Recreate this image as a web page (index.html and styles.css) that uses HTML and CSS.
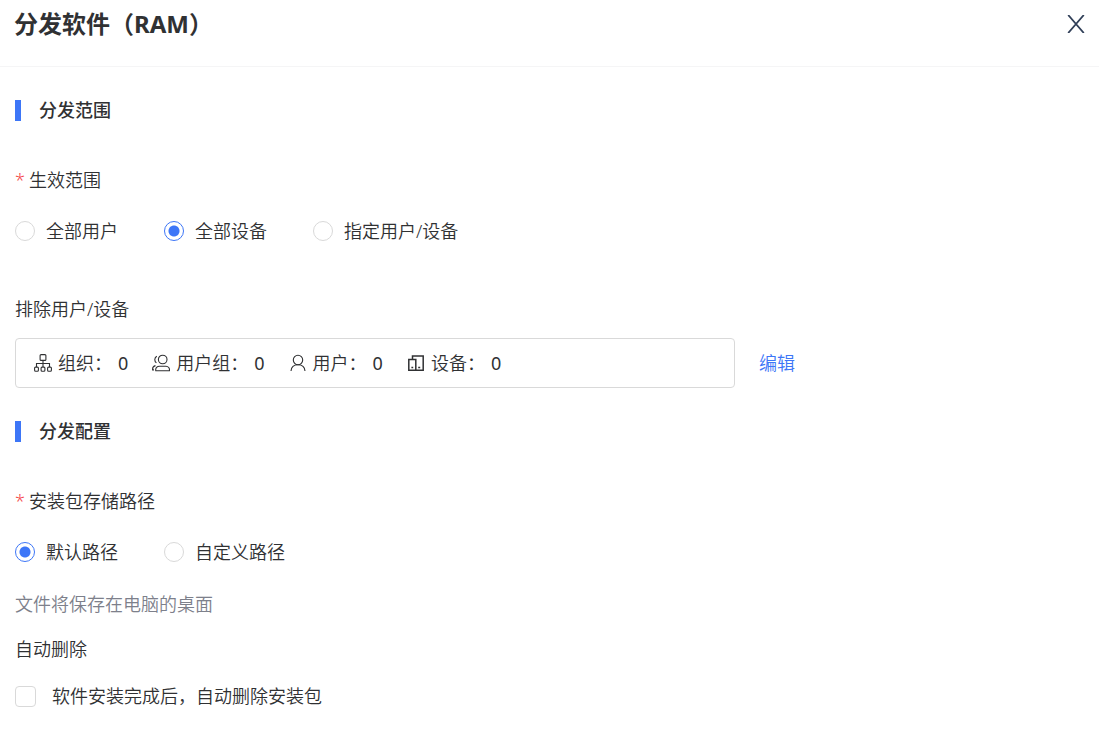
FILE: index.html
```html
<!DOCTYPE html>
<html lang="zh-CN">
<head>
<meta charset="utf-8">
<meta name="viewport" content="width=device-width, initial-scale=1">
<title>分发软件（RAM）</title>
<link rel="stylesheet" href="styles.css">
</head>
<body>
<header class="header">
  <h1 class="title">分发软件（RAM）</h1>
  <button class="close" type="button" aria-label="关闭">
    <svg width="18" height="18" viewBox="0 0 18 18" fill="none" stroke="currentColor" stroke-width="1.8"><path d="M1.2 0L16.8 18M16.8 0L1.2 18"/></svg>
  </button>
</header>
<main class="content">
  <h2 class="section">分发范围</h2>
  <fieldset class="group">
    <legend class="label required">生效范围</legend>
    <div class="options">
      <label class="option"><input type="radio" name="scope">全部用户</label>
      <label class="option"><input type="radio" name="scope" checked>全部设备</label>
      <label class="option"><input type="radio" name="scope">指定用户/设备</label>
    </div>
  </fieldset>
  <div class="exclude">
    <div class="label">排除用户/设备</div>
    <div class="exclude-row">
      <ul class="summary">
        <li class="item">
          <svg class="icon" viewBox="0 0 18 18"><rect x="6.1" y="0.6" width="5.8" height="5.8" rx="1"/><path d="M9 6.5V13M2.5 13V9.5H15.5V13"/><rect x="0.6" y="13.1" width="3.8" height="4.2" rx="1"/><rect x="7.1" y="13.1" width="3.8" height="4.2" rx="1"/><rect x="13.6" y="13.1" width="3.8" height="4.2" rx="1"/></svg>
          <span>组织：</span><span class="count">0</span>
        </li>
        <li class="item">
          <svg class="icon" viewBox="0 0 18 18"><circle cx="10.7" cy="5.5" r="4.3"/><path d="M4.8 2.2C2.2 3.8 2.2 7.1 4.4 8.9M3.8 16.8C3.2 14 5.2 12.2 7.5 12.2H14C16.3 12.2 17.9 14.1 17.4 16.8ZM3.5 11.6C1.6 12 0.4 13.6 0.6 15.9H2"/></svg>
          <span>用户组：</span><span class="count">0</span>
        </li>
        <li class="item">
          <svg class="icon" viewBox="0 0 18 18"><circle cx="9" cy="6" r="4.7"/><path d="M2 17C2.3 13 5.2 10.8 9 10.8S15.7 13 16 17"/></svg>
          <span>用户：</span><span class="count">0</span>
        </li>
        <li class="item">
          <svg class="icon icon-bold" viewBox="0 0 18 18"><path d="M5.5 5.5V2H16.2V16.2H1.8V5.5H8.8V16.2"/><path d="M4.4 13.5H6.2M11.2 13.5H13.2"/></svg>
          <span>设备：</span><span class="count">0</span>
        </li>
      </ul>
      <a class="edit" href="#">编辑</a>
    </div>
  </div>
  <h2 class="section section-next">分发配置</h2>
  <fieldset class="group">
    <legend class="label required">安装包存储路径</legend>
    <div class="options">
      <label class="option"><input type="radio" name="path" checked>默认路径</label>
      <label class="option"><input type="radio" name="path">自定义路径</label>
    </div>
  </fieldset>
  <p class="hint">文件将保存在电脑的桌面</p>
  <fieldset class="group auto-delete">
    <legend class="label">自动删除</legend>
    <label class="check"><input type="checkbox">软件安装完成后，自动删除安装包</label>
  </fieldset>
</main>
</body>
</html>
```
FILE: styles.css
```css
* {
  box-sizing: border-box;
}

body {
  margin: 0;
  background: #fff;
  color: #303133;
  font: 350 18px/26px "Noto Sans", "Noto Sans CJK SC", sans-serif;
}

h1, h2, p, ul, fieldset, legend, input {
  margin: 0;
  padding: 0;
}

.header {
  display: flex;
  align-items: center;
  justify-content: space-between;
  padding: 6px 14px 24px;
  border-bottom: 1px solid #f5f5f6;
}

.title {
  font-size: 24px;
  font-weight: 700;
  line-height: 36px;
}

.close {
  display: flex;
  padding: 0;
  border: 0;
  background: none;
  color: #303f58;
  cursor: pointer;
}

.content {
  padding: 30px 15px;
}

.section {
  display: flex;
  align-items: center;
  gap: 18px;
  font-size: 18px;
  font-weight: 500;
  line-height: 27px;
}

.section::before {
  content: "";
  width: 6px;
  height: 21px;
  background: #3d76f7;
}

.section-next {
  margin-top: 30px;
}

.group {
  min-width: 0;
  margin-top: 43px;
  border: 0;
}

.label {
  display: block;
}

.required::before {
  content: "*";
  margin-right: 4px;
  color: #f5484b;
}

.options {
  display: flex;
  flex-wrap: wrap;
  gap: 12px 46px;
  margin-top: 25px;
}

.option {
  display: flex;
  align-items: center;
  gap: 11px;
}

.option input {
  appearance: none;
  width: 20px;
  height: 20px;
  border: 1px solid #d9d9d9;
  border-radius: 50%;
  background: #fff;
}

.option input:checked {
  border-color: #3d76f7;
  background: radial-gradient(circle, #3d76f7 5px, #fff 6px);
}

.exclude {
  margin-top: 52px;
}

.exclude-row {
  display: flex;
  align-items: center;
  gap: 24px;
  margin-top: 16px;
}

.summary {
  display: flex;
  flex: 0 1 720px;
  flex-wrap: wrap;
  gap: 4px 24px;
  padding: 11px 18px;
  border: 1px solid #d9d9d9;
  border-radius: 4px;
  list-style: none;
}

.item {
  display: flex;
  align-items: center;
  gap: 6px;
}

.count {
  font-weight: 400;
}

.icon {
  width: 18px;
  height: 18px;
  fill: none;
  stroke: #303133;
  stroke-width: 1.1;
}

.icon-bold {
  stroke-width: 1.5;
}

.edit {
  color: #3d76f7;
  text-decoration: none;
}

.hint {
  margin-top: 26px;
  color: #7d808b;
}

.auto-delete {
  margin-top: 19px;
}

.check {
  display: flex;
  align-items: center;
  gap: 16px;
  margin-top: 21px;
}

.check input {
  appearance: none;
  width: 21px;
  height: 21px;
  border: 1px solid #d9d9d9;
  border-radius: 4px;
  background: #fff;
}
```
